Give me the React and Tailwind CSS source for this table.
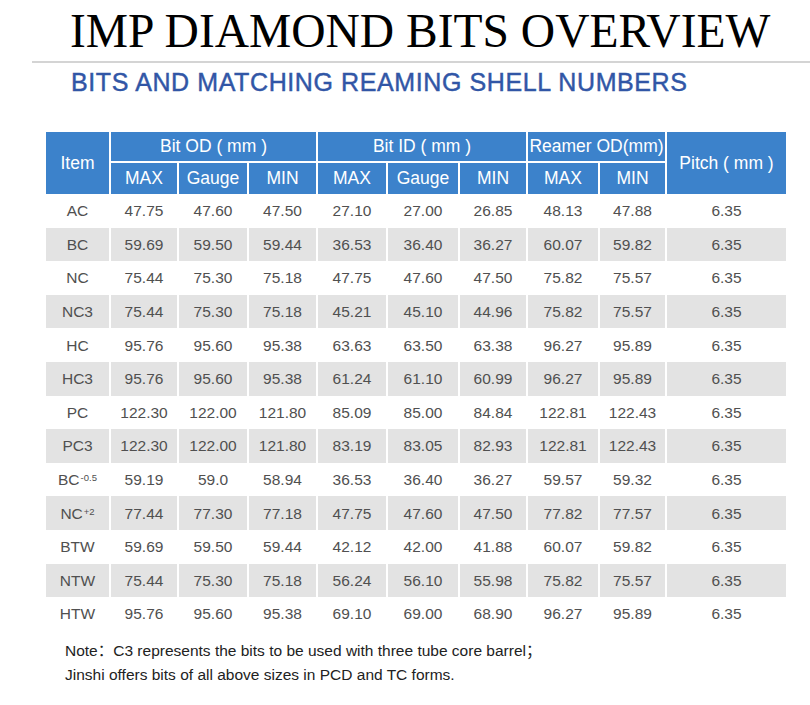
import React from "react";

const rows = [
  ["AC", "47.75", "47.60", "47.50", "27.10", "27.00", "26.85", "48.13", "47.88", "6.35"],
  ["BC", "59.69", "59.50", "59.44", "36.53", "36.40", "36.27", "60.07", "59.82", "6.35"],
  ["NC", "75.44", "75.30", "75.18", "47.75", "47.60", "47.50", "75.82", "75.57", "6.35"],
  ["NC3", "75.44", "75.30", "75.18", "45.21", "45.10", "44.96", "75.82", "75.57", "6.35"],
  ["HC", "95.76", "95.60", "95.38", "63.63", "63.50", "63.38", "96.27", "95.89", "6.35"],
  ["HC3", "95.76", "95.60", "95.38", "61.24", "61.10", "60.99", "96.27", "95.89", "6.35"],
  ["PC", "122.30", "122.00", "121.80", "85.09", "85.00", "84.84", "122.81", "122.43", "6.35"],
  ["PC3", "122.30", "122.00", "121.80", "83.19", "83.05", "82.93", "122.81", "122.43", "6.35"],
  [["BC", "-0.5"], "59.19", "59.0", "58.94", "36.53", "36.40", "36.27", "59.57", "59.32", "6.35"],
  [["NC", "+2"], "77.44", "77.30", "77.18", "47.75", "47.60", "47.50", "77.82", "77.57", "6.35"],
  ["BTW", "59.69", "59.50", "59.44", "42.12", "42.00", "41.88", "60.07", "59.82", "6.35"],
  ["NTW", "75.44", "75.30", "75.18", "56.24", "56.10", "55.98", "75.82", "75.57", "6.35"],
  ["HTW", "95.76", "95.60", "95.38", "69.10", "69.00", "68.90", "96.27", "95.89", "6.35"],
];

const cols = "grid grid-cols-[63px_66px_68px_67px_68px_70px_66px_70px_65px_119px] gap-x-[2px]";

function Cell({ children, gray }) {
  return (
    <div className={`flex items-center justify-center h-full ${gray ? "bg-[#e3e3e3]" : ""}`}>
      {children}
    </div>
  );
}

export default function App() {
  const font = { fontFamily: '"Liberation Sans", Arial, "Noto Sans CJK SC", sans-serif' };
  return (
    <div className="w-[810px] h-[705px] bg-white overflow-hidden" style={font}>
      <div
        className="pl-[70px] pt-[7px] text-[47.5px] leading-[48px] text-black whitespace-nowrap"
        style={{ fontFamily: '"Liberation Serif", "Times New Roman", serif' }}
      >
        IMP DIAMOND BITS OVERVIEW
      </div>
      <div className="ml-[32px] mt-[6px] h-[2px] bg-[#d4d4d4]" />
      <div className="pl-[71px] mt-[5px] text-[25px] leading-[28px] tracking-[0.6px] text-[#3156a6] whitespace-nowrap [-webkit-text-stroke:0.45px_#3156a6]">
        BITS AND MATCHING REAMING SHELL NUMBERS
      </div>

      <div className="ml-[46px] mt-[36px] w-[740px]">
        <div className={`${cols} grid-rows-[29px_31px] gap-y-[2px] text-white text-[17.5px] bg-white`}>
          <div className="row-span-2 bg-[#3c82cb] flex items-center justify-center">Item</div>
          <div className="col-span-3 bg-[#3c82cb] flex items-center justify-center whitespace-pre">Bit OD ( mm )</div>
          <div className="col-span-3 bg-[#3c82cb] flex items-center justify-center whitespace-pre">Bit ID ( mm )</div>
          <div className="col-span-2 bg-[#3c82cb] flex items-center justify-center">Reamer OD(mm)</div>
          <div className="row-span-2 bg-[#3c82cb] flex items-center justify-center whitespace-pre">Pitch ( mm )</div>
          {["MAX", "Gauge", "MIN", "MAX", "Gauge", "MIN", "MAX", "MIN"].map((t, i) => (
            <div key={i} className="bg-[#3c82cb] flex items-center justify-center">
              {t}
            </div>
          ))}
        </div>
        {rows.map((r, ri) => {
          const gray = ri % 2 === 1;
          return (
            <div key={ri} className={`${cols} h-[33.6px] text-[15.5px] text-[#505050]`}>
              {r.map((c, ci) => (
                <Cell key={ci} gray={gray}>
                  {Array.isArray(c) ? (
                    <span>
                      {c[0]}
                      <sup className="text-[9.5px] relative -top-[4px] ml-[1px]">{c[1]}</sup>
                    </span>
                  ) : (
                    c
                  )}
                </Cell>
              ))}
            </div>
          );
        })}
      </div>

      <div className="pl-[65px] mt-[8px] text-[15.5px] leading-[24px] text-[#222]">
        <div>Note：C3 represents the bits to be used with three tube core barrel；</div>
        <div>Jinshi offers bits of all above sizes in PCD and TC forms.</div>
      </div>
    </div>
  );
}
